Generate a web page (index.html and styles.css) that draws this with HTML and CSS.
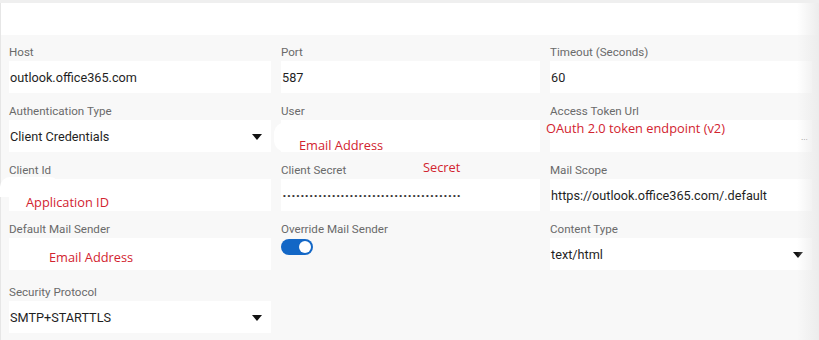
FILE: index.html
```html
<!DOCTYPE html>
<html lang="en">
<head>
  <meta charset="UTF-8">
  <meta name="viewport" content="width=device-width, initial-scale=1.0">
  <title>Mail Settings</title>
  <link rel="stylesheet" href="styles.css">
</head>
<body>

  <!-- Settings panel -->
  <div class="panel">
    <div class="panel-head"></div>

    <div class="form-grid">
      <div class="field">
        <label>Host</label>
        <div class="input">outlook.office365.com</div>
      </div>
      <div class="field">
        <label>Port</label>
        <div class="input">587</div>
      </div>
      <div class="field">
        <label>Timeout (Seconds)</label>
        <div class="input">60</div>
      </div>

      <div class="field">
        <label>Authentication Type</label>
        <div class="input select">Client Credentials<span class="caret"></span></div>
      </div>
      <div class="field">
        <label>User</label>
        <div class="input"><span class="blob blob-user"></span></div>
      </div>
      <div class="field">
        <label>Access Token Url</label>
        <div class="input"><span class="more">...</span></div>
      </div>

      <div class="field">
        <label>Client Id</label>
        <div class="input"><span class="blob blob-client"></span></div>
      </div>
      <div class="field">
        <label>Client Secret</label>
        <div class="input"><span class="dots">••••••••••••••••••••••••••••••••••••••••</span></div>
      </div>
      <div class="field">
        <label>Mail Scope</label>
        <div class="input">https://outlook.office365.com/.default</div>
      </div>

      <div class="field">
        <label>Default Mail Sender</label>
        <div class="input"></div>
      </div>
      <div class="field">
        <label>Override Mail Sender</label>
        <div class="toggle-wrap">
          <span class="toggle on"><span class="knob"></span></span>
        </div>
      </div>
      <div class="field">
        <label>Content Type</label>
        <div class="input select">text/html<span class="caret"></span></div>
      </div>

      <div class="field">
        <label>Security Protocol</label>
        <div class="input select">SMTP+STARTTLS<span class="caret"></span></div>
      </div>
    </div>

    <!-- Annotations -->
    <span class="note note-user">Email Address</span>
    <span class="note note-token">OAuth 2.0 token endpoint (v2)</span>
    <span class="note note-secret">Secret</span>
    <span class="note note-appid">Application ID</span>
    <span class="note note-sender">Email Address</span>

    <div class="scroll-shade"></div>
  </div>

</body>
</html>
```

FILE: styles.css
```css
/* General Styling */
* {
  margin: 0;
  padding: 0;
  box-sizing: border-box;
  font-family: Roboto, "Liberation Sans", sans-serif;
}

body {
  background-color: #efefef;
  overflow: hidden;
}

/* Panel */
.panel {
  position: relative;
  margin-top: 3px;
  min-height: 337px;
  background-color: #f8f8f8;
  border-left: 1px solid #e6e6e6;
}

.panel-head {
  height: 32px;
  background-color: #ffffff;
}

/* Form grid */
.form-grid {
  display: grid;
  grid-template-columns: 262px 259px 262px;
  column-gap: 10px;
  row-gap: 10px;
  padding: 9px 0 0 8px;
}

.field label {
  display: block;
  font-size: 11.6px;
  line-height: 17px;
  color: #6a6a6a;
}

.input {
  position: relative;
  display: flex;
  align-items: center;
  height: 32px;
  padding-left: 1px;
  background-color: #ffffff;
  font-size: 12.7px;
  color: #1f1f1f;
}

.select .caret {
  position: absolute;
  right: 9px;
  top: 14px;
  width: 0;
  height: 0;
  border-left: 5px solid transparent;
  border-right: 5px solid transparent;
  border-top: 6px solid #111;
}

.more {
  position: absolute;
  right: 4px;
  top: 13px;
  font-size: 9px;
  line-height: 9px;
  color: #666;
}

.dots {
  font-family: "Liberation Sans", sans-serif;
  font-size: 8px;
  letter-spacing: 1.67px;
  color: #333;
  padding-left: 1px;
}

.blob {
  position: absolute;
  background-color: #ffffff;
}

.blob-user {
  left: -7px;
  top: 2px;
  width: 20px;
  height: 30px;
  border-radius: 12px 0 0 12px;
}

.blob-client {
  left: -9px;
  top: -2px;
  width: 60px;
  height: 20px;
  border-radius: 10px 10px 0 0;
}

/* Toggle */
.toggle-wrap {
  height: 36px;
  padding-top: 1px;
}

.toggle {
  position: relative;
  display: block;
  width: 32px;
  height: 16px;
  border-radius: 8px;
  background-color: #1367c6;
}

.toggle .knob {
  position: absolute;
  right: 2px;
  top: 2px;
  width: 12px;
  height: 12px;
  border-radius: 50%;
  background-color: #ffffff;
}

/* Annotations */
.note {
  position: absolute;
  font-family: "Open Sans", sans-serif;
  font-size: 12.8px;
  line-height: 18px;
  color: #d2232f;
  white-space: nowrap;
}

.note-user { left: 298px; top: 133px; }
.note-token { left: 545px; top: 116px; }
.note-secret { left: 422px; top: 155px; }
.note-appid { left: 25px; top: 190px; }
.note-sender { left: 48px; top: 245px; }

/* Right scroll shade */
.scroll-shade {
  position: absolute;
  top: 0;
  right: 0;
  width: 22px;
  height: 100%;
  background: linear-gradient(to right, rgba(236, 236, 236, 0), #ececec);
}
```
